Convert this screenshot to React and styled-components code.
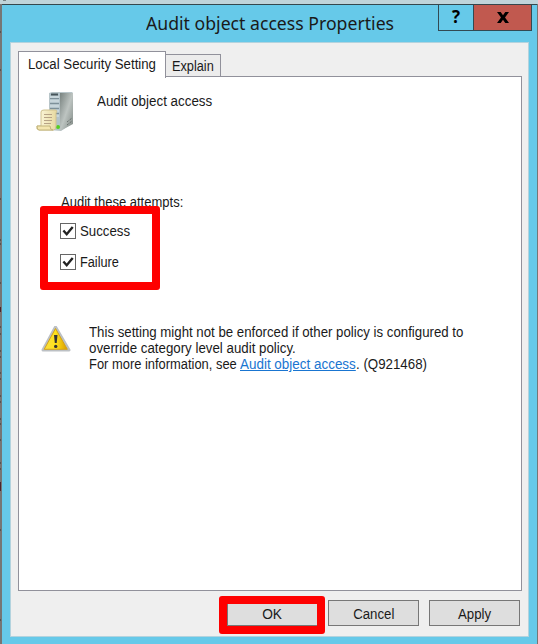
import React from "react";
import styled, { createGlobalStyle } from "styled-components";

const GlobalStyle = createGlobalStyle`
  * { box-sizing: border-box; }
  body { margin: 0; overflow: hidden; }
`;

const Desktop = styled.div`
  width: 538px;
  height: 644px;
  padding: 4px 1px 0 2px;
  background: linear-gradient(#c0d4da 0 4px, #767675 4px);
  color: #1a1a1a;
  font-family: "Liberation Sans", Arial, sans-serif;
  font-size: 14px;
  position: relative;
`;

const EdgeMarks = styled.svg`
  position: absolute;
  left: 0;
  top: 0;
`;

const Dialog = styled.section`
  height: 640px;
  border-top: 1px solid #35474d;
  background: #66c9e9;
  display: flex;
  flex-direction: column;
`;

const TitleBar = styled.header`
  height: 37px;
  flex: none;
  display: flex;
  justify-content: flex-end;
`;

const Title = styled.h1`
  flex: 1;
  margin: 0;
  padding: 3px 0 0 144px;
  font: 400 18.5px/30px "Noto Sans", "Open Sans", sans-serif;
  white-space: nowrap;
`;

const Fit = styled.span`
  display: inline-block;
  width: ${(p) => (p.$width ? `${p.$width}px` : "auto")};
  white-space: pre;
  transform: scaleX(${(p) => p.$x || 0.945});
  transform-origin: ${(p) => p.$origin || "left"} center;
`;

const Caption = styled.button`
  width: ${(p) => p.$width}px;
  height: 26px;
  margin: 0 ${(p) => p.$end || 0}px 0 0;
  padding: 0 0 1px;
  border: solid #324a53;
  border-width: 0 1px 1px ${(p) => (p.$first ? 1 : 0)}px;
  background: ${(p) => p.$bg || "#66c9e9"};
  display: flex;
  align-items: center;
  justify-content: center;
  font: 700 17px/20px "Open Sans", sans-serif;
  color: #000;
`;

const Client = styled.main`
  width: 519px;
  height: 595px;
  flex: none;
  margin-left: 8px;
  padding: 8px 7px 0 7px;
  border: 1px solid #b3d3de;
  background: #efefef;
`;

const Tabs = styled.nav`
  height: 25px;
  display: flex;
  align-items: flex-end;
`;

const Tab = styled.div`
  width: ${(p) => p.$width}px;
  height: ${(p) => (p.$active ? 27 : 22)}px;
  padding: ${(p) => (p.$active ? "4px 0 0 9px" : "3px 0 0 6px")};
  border: 1px solid #91919b;
  border-bottom: 0;
  border-left-width: ${(p) => (p.$active ? 1 : 0)}px;
  background: ${(p) => (p.$active ? "#fff" : "#ececec")};
  line-height: 17px;
  ${(p) => p.$active && "position: relative; margin-bottom: -2px; z-index: 1;"}
`;

const Panel = styled.div`
  width: 504px;
  height: 515px;
  padding: 15px 17px 0;
  border: 1px solid #91919b;
  background: #fff;
`;

const Heading = styled.div`
  height: 98px;
  display: flex;
  svg { flex: none; }
  span { height: 18px; line-height: 18px; margin-left: 21px; }
`;

const Attempts = styled.fieldset`
  margin: 0 0 0 24px;
  padding: 3px 0 0;
  border: 0;
  height: 136px;
  position: relative;
`;

const Legend = styled.div`
  height: 30px;
  padding-left: 1px;
  line-height: 18px;
`;

const Choice = styled.label`
  height: 31px;
  display: flex;
  align-items: flex-start;
  gap: 4px;
  line-height: 16px;
`;

const Notice = styled.div`
  display: flex;
  margin-left: 5px;
  line-height: 16px;
`;

const NoticeText = styled.div`
  margin: -2px 0 0 18px;
`;

const Line = styled.div`
  height: 16px;
  display: flex;
`;

const Link = styled.a`
  color: #1975d1;
  text-decoration: underline;
`;

const Actions = styled.footer`
  display: flex;
  justify-content: flex-end;
  gap: 10px;
  padding: 9px 1px 0 0;
`;

const ActionSlot = styled.div`
  position: relative;
`;

const Action = styled.button`
  display: block;
  width: 91px;
  height: 26px;
  margin: 0;
  padding: 1px 0 0;
  border: 1px solid #777;
  background: #dedede;
  color: #1a1a1a;
  font: inherit;
`;

const Highlight = styled.div`
  position: absolute;
  left: ${(p) => p.$left}px;
  top: ${(p) => p.$top}px;
  width: ${(p) => p.$width}px;
  height: ${(p) => p.$height}px;
  border: 8px solid #fe0000;
  border-radius: 3px;
  pointer-events: none;
`;

function Server() {
  return (
    <svg width="40" height="42" viewBox="0 0 40 42">
      <defs>
        <linearGradient id="side" x1="0" y1="0" x2="1" y2="1">
          <stop stopColor="#78827f" /><stop offset=".5" stopColor="#bdc4c1" /><stop offset="1" stopColor="#7e8783" />
        </linearGradient>
        <linearGradient id="paper" x1="0" x2="1">
          <stop stopColor="#fffbe3" /><stop offset="1" stopColor="#e6d89f" />
        </linearGradient>
      </defs>
      <path d="M13 1l3-1h20l1 1v30l-12 8-12-1z" fill="#b8c5c9" />
      <path d="M24 1h13v31l-13 7z" fill="url(#side)" />
      <path d="M14 1h10v37H14z" fill="#b3c3ca" />
      <path d="M15 2.5h7" stroke="#46545a" strokeWidth="2" />
      <path d="M14 6.5h9M14 11.5h9M14 16.5h9M14 21.5h9" stroke="#7d9099" />
      <path d="M14 5h9M14 9h9M14 14h9M14 19h9M14 24h9" stroke="#dce8ec" />
      <path d="M31 30l5-4M31 33l5-4" stroke="#59605e" strokeDasharray="1 1" />
      <circle cx="22" cy="35" r="2" fill="#55cf20" />
      <path d="M5 20q0-2 3-2h11q3 0 1 3v13q0 3-2 4H3q-3 0-2-4h4z" fill="url(#paper)" stroke="#d0c290" />
      <path d="M1 34h13q0 4 3 4H3q-2 0-2-4z" fill="#f4e6af" stroke="#c2b47c" />
      <path d="M8 22.5h8M8 25.5h8M8 28.5h8M8 31.5h7" stroke="#b7a386" />
    </svg>
  );
}

function Check() {
  return (
    <svg width="16" height="16" viewBox="0 0 16 16">
      <rect x=".5" y=".5" width="15" height="15" fill="#fff" stroke="#666" />
      <path d="M3.4 7.5l3.3 3.7 6-7.2" fill="none" stroke="#222" strokeWidth="2.4" />
    </svg>
  );
}

function Warning() {
  return (
    <svg width="30" height="28" viewBox="0 0 30 28">
      <defs>
        <linearGradient id="warn" x1="0" x2="1">
          <stop stopColor="#f9df42" /><stop offset=".5" stopColor="#ffe21a" /><stop offset="1" stopColor="#d99c00" />
        </linearGradient>
      </defs>
      <path d="M14.5 1L28 24H2z" fill="#c5c8cb" stroke="#bcc0c4" strokeWidth="3" strokeLinejoin="round" />
      <path d="M14.5 2.5L26.3 23.3H3.2z" fill="url(#warn)" stroke="#d4a217" strokeLinejoin="round" />
      <path d="M13 9h3.5l-.8 8h-1.9z" fill="#333" />
      <circle cx="14.7" cy="20.4" r="1.7" fill="#333" />
    </svg>
  );
}

export default function App() {
  return (
    <>
      <GlobalStyle />
      <Desktop>
        <EdgeMarks width="538" height="644">
          <path d="M0 199h1M0 240h1M0 244h1M0 283h1M0 309h1M0 327h1M0 334h1M0 351h1M0 357h1M0 373h1M0 379h1M0 396h1M0 402h1M0 419h1M0 424h1M0 440h1M0 463h1M0 469h1M0 530h1M0 620h1M0 32h1M0 70h1M3 0h3" stroke="#333" />
          <path d="M.5 307v5M.5 482v9" stroke="#49242e" />
        </EdgeMarks>
        <Dialog>
          <TitleBar>
            <Title><Fit $x={0.954}>Audit object access Properties</Fit></Title>
            <Caption $first $width={36} aria-label="Help">?</Caption>
            <Caption $width={58} $end={5} $bg="#c1594f" aria-label="Close">
              <svg width="12" height="11" viewBox="0 0 12 11">
                <path d="M0 0h3.7L6 3.2 8.3 0H12L8 5.4 12 11H8.3L6 7.7 3.7 11H0l4-5.6z" fill="#000" />
              </svg>
            </Caption>
          </TitleBar>
          <Client>
            <Tabs>
              <Tab $active $width={148}><Fit>Local Security Setting</Fit></Tab>
              <Tab $width={55}><Fit $x={0.91}>Explain</Fit></Tab>
            </Tabs>
            <Panel>
              <Heading>
                <Server />
                <Fit $x={0.955}>Audit object access</Fit>
              </Heading>
              <Attempts>
                <Legend><Fit $x={0.93}>Audit these attempts:</Fit></Legend>
                <Choice><Check /><Fit>Success</Fit></Choice>
                <Choice><Check /><Fit $x={0.91}>Failure</Fit></Choice>
                <Highlight $left={-20} $top={16} $width={120} $height={84} />
              </Attempts>
              <Notice>
                <Warning />
                <NoticeText>
                  <Line><Fit>This setting might not be enforced if other policy is configured to</Fit></Line>
                  <Line><Fit $x={0.95}>override category level audit policy.</Fit></Line>
                  <Line>
                    <Fit $x={0.922} $width={151}>For more information, see </Fit>
                    <Fit $x={0.96} $width={116}><Link>Audit object access</Link></Fit>
                    <Fit $x={0.95}>. (Q921468)</Fit>
                  </Line>
                </NoticeText>
              </Notice>
            </Panel>
            <Actions>
              <ActionSlot>
                <Action><Fit $x={0.98} $origin="center">OK</Fit></Action>
                <Highlight $left={-8} $top={-4} $width={106} $height={38} />
              </ActionSlot>
              <Action><Fit $origin="center">Cancel</Fit></Action>
              <Action><Fit $origin="center">Apply</Fit></Action>
            </Actions>
          </Client>
        </Dialog>
      </Desktop>
    </>
  );
}
